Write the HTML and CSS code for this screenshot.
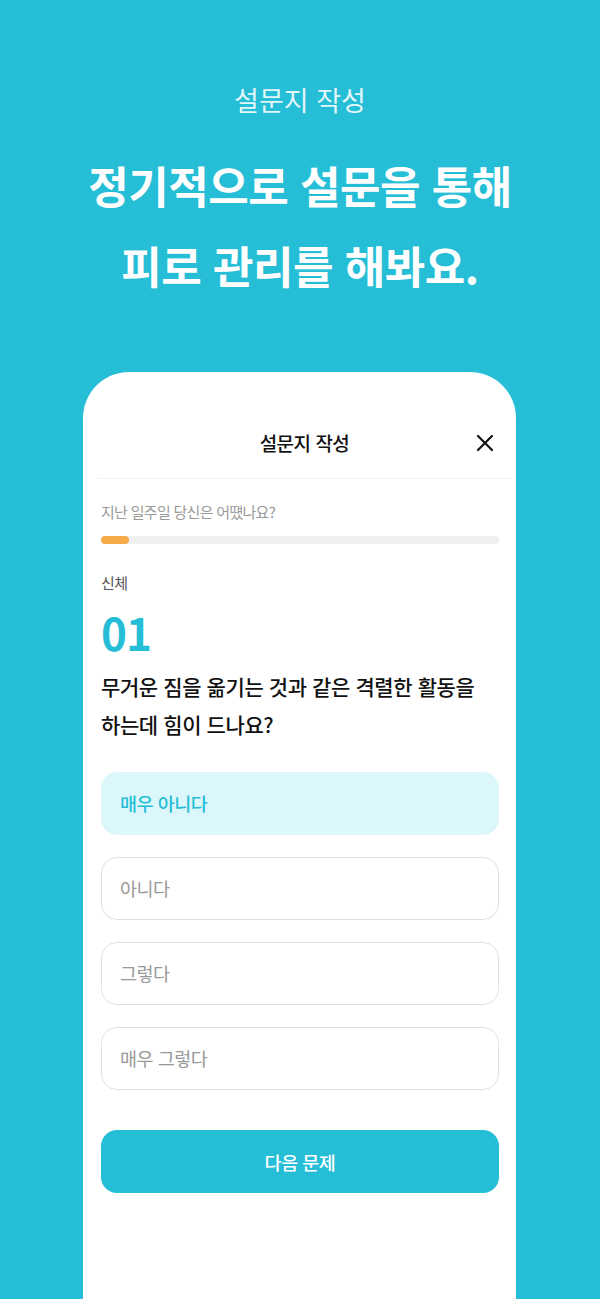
FILE: index.html
```html
<!DOCTYPE html>
<html lang="ko">
<head>
    <meta charset="UTF-8">
    <meta name="viewport" content="width=device-width, initial-scale=1.0">
    <title>설문지 작성</title>
    <link rel="stylesheet" href="styles.css">
</head>
<body>
    <div class="page">
        <div class="intro">
            <p class="intro-sub">설문지 작성</p>
            <h1 class="intro-title">정기적으로 설문을 통해<br>피로 관리를 해봐요.</h1>
        </div>

        <div class="card">
            <div class="card-header">
                <span class="card-title">설문지 작성</span>
                <button class="close-btn" aria-label="닫기">
                    <svg width="18" height="18" viewBox="0 0 18 18">
                        <path d="M2 2 L16 16 M16 2 L2 16" stroke="#111" stroke-width="2.2" stroke-linecap="round"/>
                    </svg>
                </button>
            </div>

            <div class="card-body">
                <p class="survey-desc">지난 일주일 당신은 어떘나요?</p>
                <div class="progress">
                    <div class="progress-fill" style="width: 7%"></div>
                </div>

                <p class="category">신체</p>
                <p class="q-num">01</p>
                <p class="question">무거운 짐을 옮기는 것과 같은 격렬한 활동을<br>하는데 힘이 드나요?</p>

                <div class="options">
                    <div class="option selected">매우 아니다</div>
                    <div class="option">아니다</div>
                    <div class="option">그렇다</div>
                    <div class="option">매우 그렇다</div>
                </div>

                <button class="next-btn">다음 문제</button>
            </div>
        </div>
    </div>
</body>
</html>
```

FILE: styles.css
```css
body {
    margin: 0;
    background-color: #26bed6;
    font-family: "Noto Sans CJK KR", "Noto Sans", sans-serif;
}
p {
    margin: 0;
}
.page {
    height: 1299px;
    overflow: hidden;
    display: flex;
    flex-direction: column;
}
.intro {
    padding-top: 80px;
    text-align: center;
    color: #fff;
}
.intro-sub {
    font-size: 27px;
    line-height: 40px;
    color: rgba(255, 255, 255, 0.88);
}
.intro-title {
    margin: 25px 0 0;
    font-size: 44px;
    line-height: 80px;
    font-weight: 700;
    letter-spacing: -0.5px;
}
.card {
    flex: 1;
    margin: 67px 84px 0 83px;
    background-color: #fff;
    border-radius: 46px 46px 0 0;
}
.card-header {
    position: relative;
    margin: 0 4px 0 14px;
    padding: 52px 0 16px;
    text-align: center;
    border-bottom: 1px solid #f2f2f2;
}
.card-title {
    font-size: 19px;
    line-height: 38px;
    font-weight: 500;
    color: #111;
    letter-spacing: -0.5px;
}
.close-btn {
    position: absolute;
    right: 18px;
    top: 62px;
    padding: 0;
    border: none;
    background: none;
    width: 18px;
    height: 18px;
}
.card-body {
    padding: 0 17px 0 18px;
}
.survey-desc {
    margin-top: 21px;
    font-size: 15px;
    line-height: 24px;
    color: #9a9a9a;
    letter-spacing: -0.7px;
}
.progress {
    margin-top: 12px;
    height: 8px;
    border-radius: 4px;
    background-color: #efefef;
}
.progress-fill {
    height: 100%;
    border-radius: 4px;
    background-color: #f5ac48;
}
.category {
    margin-top: 27px;
    font-size: 15px;
    line-height: 24px;
    color: #555;
    letter-spacing: -0.5px;
}
.q-num {
    margin-top: 13px;
    font-size: 44px;
    line-height: 48px;
    font-weight: 700;
    color: #26bed6;
    letter-spacing: -1px;
}
.question {
    margin-top: 11px;
    font-size: 21px;
    line-height: 38px;
    font-weight: 500;
    color: #111;
    letter-spacing: -0.4px;
}
.options {
    margin-top: 29px;
    display: flex;
    flex-direction: column;
    gap: 22px;
}
.option {
    height: 61px;
    line-height: 61px;
    padding: 0 18px;
    border: 1px solid #e0e0e0;
    border-radius: 16px;
    font-size: 18.5px;
    color: #999;
    letter-spacing: -0.5px;
}
.option.selected {
    background-color: #dbf7fb;
    border-color: #dbf7fb;
    color: #26bed6;
    font-weight: 500;
}
.next-btn {
    display: block;
    width: 100%;
    margin-top: 40px;
    height: 63px;
    border: none;
    border-radius: 16px;
    background-color: #26bed6;
    color: #fff;
    font-family: inherit;
    font-size: 18.5px;
    font-weight: 500;
    letter-spacing: -0.5px;
}
```
